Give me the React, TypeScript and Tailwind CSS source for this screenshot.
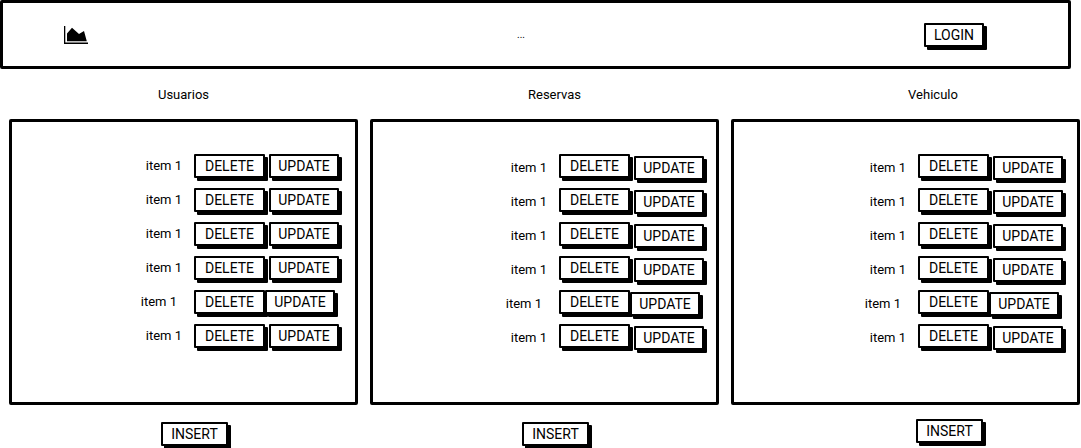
import type { ReactNode } from "react";

type Column = {
  title: string;
  titleClass: string;
  listClass: string;
  dropClass: string;
  insertClass: string;
};

const columns: Column[] = [
  {
    title: "Usuarios",
    titleClass: "",
    listClass: "pr-[16px]",
    dropClass: "",
    insertClass: "pt-[17px] pl-[22px]",
  },
  {
    title: "Reservas",
    titleClass: "pl-[20px]",
    listClass: "pr-[12px]",
    dropClass: "mt-[2px]",
    insertClass: "pt-[17px] pl-[22px]",
  },
  {
    title: "Vehiculo",
    titleClass: "pl-[55px]",
    listClass: "pr-[14px]",
    dropClass: "mt-[2px]",
    insertClass: "pt-[14px] pl-[88px]",
  },
];

const rows = [
  { label: "item 1", shifted: false },
  { label: "item 1", shifted: false },
  { label: "item 1", shifted: false },
  { label: "item 1", shifted: false },
  { label: "item 1", shifted: true },
  { label: "item 1", shifted: false },
];

function SketchButton({ children, className = "" }: { children: ReactNode; className?: string }) {
  return (
    <button
      type="button"
      className={`flex h-[24px] shrink-0 items-center justify-center rounded-[1px] border-2 border-black bg-white px-2 text-[14px] leading-[20px] shadow-[3px_3px_0_0_#000] ${className}`}
    >
      {children}
    </button>
  );
}

function ChartIcon() {
  return (
    <svg width="24" height="18" viewBox="0 0 24 18" aria-hidden="true" className="shrink-0">
      <path d="M0 0h1.3v16.6h22.7v1.4H0z" fill="#000" />
      <path d="M3 7.6 8 1.7l7 6.4 5-3.2L22.8 15.2H3z" fill="#000" />
    </svg>
  );
}

export default function App() {
  return (
    <div className="min-h-screen bg-white font-['Roboto','Noto_Sans',sans-serif] text-[13px] leading-[20px] text-black">
      <header className="mr-[10px] flex h-[69px] items-center rounded-[2px] border-[3px] border-black pr-[84px] pl-[61px]">
        <a href="#" aria-label="Home">
          <ChartIcon />
        </a>
        <span className="flex-1 pl-[30px] text-center text-[10px]">...</span>
        <SketchButton>LOGIN</SketchButton>
      </header>

      <main className="mt-[16px] grid grid-cols-3 gap-[12px] pr-px pl-[9px]">
        {columns.map((column) => (
          <section key={column.title} className="min-w-0">
            <h2 className={`text-center ${column.titleClass}`}>{column.title}</h2>
            <ul
              className={`mt-[14px] flex flex-col gap-[10px] rounded-[2px] border-[3px] border-black pt-[32px] pb-[54px] ${column.listClass}`}
            >
              {rows.map((row, index) => (
                <li
                  key={index}
                  className={`flex h-[24px] items-start justify-end ${row.shifted ? "pr-[4px]" : ""}`}
                >
                  <span
                    className={`leading-[24px] ${column.dropClass} ${row.shifted ? "mr-[17px]" : "mr-[12px]"}`}
                  >
                    {row.label}
                  </span>
                  <SketchButton className="w-[71px]">DELETE</SketchButton>
                  <SketchButton
                    className={`w-[70px] ${column.dropClass} ${row.shifted ? "" : "ml-[4px]"}`}
                  >
                    UPDATE
                  </SketchButton>
                </li>
              ))}
            </ul>
            <div className={`flex justify-center ${column.insertClass}`}>
              <SketchButton>INSERT</SketchButton>
            </div>
          </section>
        ))}
      </main>
    </div>
  );
}
